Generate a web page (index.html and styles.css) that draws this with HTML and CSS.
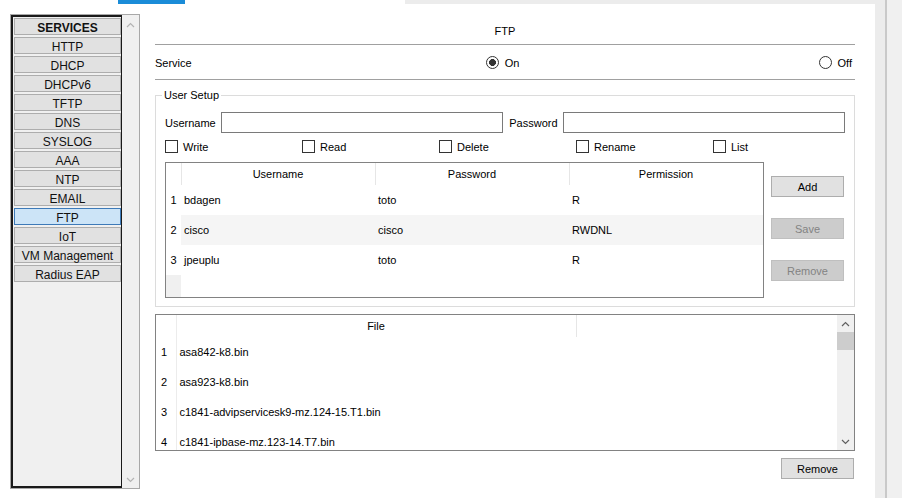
FILE: index.html
```html
<!DOCTYPE html>
<html lang="en">
<head>
<meta charset="utf-8">
<title>FTP Service</title>
<link rel="stylesheet" href="styles.css">
</head>
<body>
<div class="app">
  <div class="frame">
    <div class="tabstrip">
      <span class="tab-lead"></span><span class="tab-active"></span><span class="tab-space"></span><span class="tab-rest"></span>
    </div>
    <div class="workspace">
      <aside class="side">
        <nav class="side-list">
          <div class="svc-btn svc-head">SERVICES</div>
          <div class="svc-btn">HTTP</div>
          <div class="svc-btn">DHCP</div>
          <div class="svc-btn">DHCPv6</div>
          <div class="svc-btn">TFTP</div>
          <div class="svc-btn">DNS</div>
          <div class="svc-btn">SYSLOG</div>
          <div class="svc-btn">AAA</div>
          <div class="svc-btn">NTP</div>
          <div class="svc-btn">EMAIL</div>
          <div class="svc-btn svc-sel">FTP</div>
          <div class="svc-btn">IoT</div>
          <div class="svc-btn">VM Management</div>
          <div class="svc-btn">Radius EAP</div>
        </nav>
        <div class="side-scroll">
          <svg class="chev chev-light" width="9" height="6" viewBox="0 0 9 6"><path d="M1 5 L4.5 1.5 L8 5"/></svg>
          <svg class="chev chev-light" width="9" height="6" viewBox="0 0 9 6"><path d="M1 1 L4.5 4.5 L8 1"/></svg>
        </div>
      </aside>

      <main class="content">
        <div class="title">FTP</div>

        <div class="service-row">
          <span class="service-label">Service</span>
          <label class="radio-opt radio-on"><input type="radio" name="svc" class="rb" checked><span>On</span></label>
          <label class="radio-opt radio-off"><input type="radio" name="svc" class="rb"><span>Off</span></label>
        </div>

        <fieldset class="group">
          <legend>User Setup</legend>
          <div class="cred">
            <span class="cred-label">Username</span>
            <input type="text" class="tin">
            <span class="cred-label cred-label-2">Password</span>
            <input type="text" class="tin">
          </div>
          <div class="checks">
            <label class="check"><input type="checkbox" class="cb"><span>Write</span></label>
            <label class="check"><input type="checkbox" class="cb"><span>Read</span></label>
            <label class="check"><input type="checkbox" class="cb"><span>Delete</span></label>
            <label class="check"><input type="checkbox" class="cb"><span>Rename</span></label>
            <label class="check"><input type="checkbox" class="cb"><span>List</span></label>
          </div>
          <div class="users-row">
            <div class="utable-wrap">
              <table class="utable">
                <colgroup><col class="c-num"><col class="c-u"><col class="c-u"><col class="c-u"></colgroup>
                <thead>
                  <tr><th></th><th>Username</th><th>Password</th><th>Permission</th></tr>
                </thead>
                <tbody>
                  <tr><td class="num">1</td><td>bdagen</td><td>toto</td><td>R</td></tr>
                  <tr class="alt"><td class="num">2</td><td>cisco</td><td>cisco</td><td>RWDNL</td></tr>
                  <tr><td class="num">3</td><td>jpeuplu</td><td>toto</td><td>R</td></tr>
                  <tr class="filler"><td class="num"></td><td></td><td></td><td></td></tr>
                </tbody>
              </table>
            </div>
            <div class="ubtns">
              <button class="btn">Add</button>
              <button class="btn" disabled>Save</button>
              <button class="btn" disabled>Remove</button>
            </div>
          </div>
        </fieldset>

        <div class="files">
          <div class="files-body">
            <table class="ftable">
              <colgroup><col class="f-num"><col class="f-name"><col></colgroup>
              <thead>
                <tr><th class="num"></th><th class="sep">File</th><th></th></tr>
              </thead>
              <tbody>
                <tr><td class="num">1</td><td>asa842-k8.bin</td><td></td></tr>
                <tr><td class="num">2</td><td>asa923-k8.bin</td><td></td></tr>
                <tr><td class="num">3</td><td>c1841-advipservicesk9-mz.124-15.T1.bin</td><td></td></tr>
                <tr><td class="num">4</td><td>c1841-ipbase-mz.123-14.T7.bin</td><td></td></tr>
              </tbody>
            </table>
          </div>
          <div class="vscroll">
            <div class="arrow-btn"><svg class="chev" width="9" height="6" viewBox="0 0 9 6"><path d="M1 5 L4.5 1.5 L8 5"/></svg></div>
            <div class="thumb"></div>
            <div class="track"></div>
            <div class="arrow-btn"><svg class="chev" width="9" height="6" viewBox="0 0 9 6"><path d="M1 1 L4.5 4.5 L8 1"/></svg></div>
          </div>
        </div>

        <button class="btn btn-files-remove">Remove</button>
      </main>
    </div>
  </div>
  <div class="edge"></div>
</div>
</body>
</html>
```

FILE: styles.css
```css
* { box-sizing: border-box; }

body {
  margin: 0;
  width: 902px;
  height: 498px;
  overflow: hidden;
  background: #f0f0f0;
  font: 11px "Liberation Sans", Arial, sans-serif;
  color: #000;
}

.app { display: flex; height: 498px; }

.frame {
  width: 887px;
  border-right: 2px solid #c9c9c9;
  display: flex;
  flex-direction: column;
}

.tabstrip { height: 4px; display: flex; flex: none; }
.tab-lead { width: 118px; background: #fff; }
.tab-active { width: 67px; background: #1a8cd8; }
.tab-space { width: 220px; background: #fff; }
.tab-rest { flex: 1; background: #ececec; }

.edge { flex: 1; background: #f0f0f0; }

.workspace {
  flex: 1;
  display: flex;
  align-items: flex-start;
  background: #fff;
  border-right: 10px solid #ececec;
}

/* ---------- sidebar ---------- */
.side {
  margin: 10px 0 0 10px;
  width: 130px;
  height: 475px;
  border: 1px solid #a8a8a8;
  display: flex;
  flex: none;
}

.side-list {
  width: 111px;
  border: 2px solid #1a1a1a;
  border-right-width: 1px;
  background: #f0f0f0;
  padding: 1px 0 0 1px;
  display: flex;
  flex-direction: column;
  gap: 2px;
}

.svc-btn {
  height: 17px;
  border: 1px solid #adadad;
  background: #e1e1e1;
  font-size: 12px;
  line-height: 17px;
  padding-top: 1px;
  text-align: center;
  color: #111;
  white-space: nowrap;
}
.svc-head { font-weight: bold; }
.svc-sel { background: #cce4f7; border-color: #3d7ab8; }

.side-scroll {
  flex: 1;
  background: #f0f0f0;
  display: flex;
  flex-direction: column;
  justify-content: space-between;
  align-items: center;
  padding: 7px 0 5px;
}

.chev { display: block; }
.chev path { fill: none; stroke: #606060; stroke-width: 1.2; }
.chev-light path { stroke: #b4b4b4; }

/* ---------- content ---------- */
.content {
  margin-left: 15px;
  width: 700px;
  display: flex;
  flex-direction: column;
  flex: none;
}

.title {
  margin-top: 19px;
  line-height: 16px;
  padding-bottom: 5px;
  border-bottom: 1px solid #a0a0a0;
  text-align: center;
}

.service-row {
  height: 35px;
  padding-top: 1px;
  display: grid;
  grid-template-columns: 1fr auto 1fr;
  align-items: center;
  border-bottom: 1px solid #a0a0a0;
}
.radio-opt { display: flex; align-items: center; gap: 6px; }
.radio-on { padding-right: 5px; }
.radio-off { justify-self: end; padding-right: 3px; }

.rb {
  appearance: none;
  -webkit-appearance: none;
  margin: 0;
  width: 13px;
  height: 13px;
  border: 1px solid #333;
  border-radius: 50%;
  background: #fff;
}
.rb:checked { background: radial-gradient(circle, #333 0 3.2px, #fff 3.7px); }

.group {
  margin: 8px 0 0;
  padding: 10px 9px 8px;
  border: 1px solid #dcdcdc;
  min-inline-size: auto;
}
.group legend {
  padding: 0 2px;
  margin-left: -3px;
  line-height: 14px;
}

.cred { display: flex; align-items: center; height: 21px; }
.cred-label { margin-right: 5px; }
.cred-label-2 { margin-left: 6px; }
.tin {
  flex: 1;
  min-width: 0;
  height: 21px;
  border: 1px solid #7a7a7a;
  padding: 0 3px;
  margin: 0;
  font: inherit;
  background: #fff;
}

.checks {
  margin-top: 7px;
  height: 13px;
  display: grid;
  grid-template-columns: repeat(5, 137px);
}
.check { display: flex; align-items: center; gap: 5px; }
.cb {
  appearance: none;
  -webkit-appearance: none;
  margin: 0;
  width: 13px;
  height: 13px;
  border: 1px solid #333;
  background: #fff;
}

.users-row { margin-top: 9px; display: flex; gap: 7px; }

.utable-wrap {
  width: 599px;
  height: 136px;
  border: 1px solid #828282;
  overflow: hidden;
}
.utable, .ftable {
  border-collapse: collapse;
  table-layout: fixed;
}
.utable { width: 597px; }
.c-num { width: 15px; }
.c-u { width: 194px; }
.utable th {
  height: 22px;
  padding: 0;
  font-weight: normal;
  text-align: center;
  border-right: 1px solid #e6e6e6;
}
.utable td {
  height: 30px;
  padding: 0 0 0 3px;
  white-space: nowrap;
}
.utable td.num { padding: 0; text-align: center; }
.utable tr.alt td:not(.num) { background: #f5f5f5; }
.utable tr.filler td { height: 22px; }
.utable tr.filler td.num { background: #f0f0f0; }

.ubtns {
  margin-top: 14px;
  width: 73px;
  display: flex;
  flex-direction: column;
  gap: 21px;
}

.btn {
  height: 21px;
  margin: 0;
  padding: 0;
  border: 1px solid #adadad;
  background: #e1e1e1;
  font: inherit;
  color: #000;
}
.btn:disabled { background: #cccccc; border-color: #bfbfbf; color: #838383; }

.files {
  margin-top: 7px;
  height: 137px;
  border: 1px solid #828282;
  display: flex;
}
.files-body { flex: 1; overflow: hidden; }
.ftable { width: 681px; }
.f-num { width: 20px; }
.f-name { width: 400px; }
.ftable th {
  height: 22px;
  padding: 0;
  font-weight: normal;
  text-align: center;
}
.ftable th.sep { border-right: 1px solid #e6e6e6; }
.ftable td {
  height: 30px;
  padding: 0 0 0 3px;
  white-space: nowrap;
}
.ftable .num {
  padding: 0 0 0 5px;
  text-align: left;
  border-right: 1px solid #ececec;
}

.vscroll {
  width: 17px;
  flex: none;
  background: #f0f0f0;
  display: flex;
  flex-direction: column;
}
.arrow-btn {
  height: 17px;
  display: flex;
  align-items: center;
  justify-content: center;
}
.thumb { height: 18px; background: #cdcdcd; }
.track { flex: 1; }

.btn-files-remove {
  align-self: flex-end;
  margin-top: 7px;
  margin-right: 1px;
  width: 73px;
}
```
